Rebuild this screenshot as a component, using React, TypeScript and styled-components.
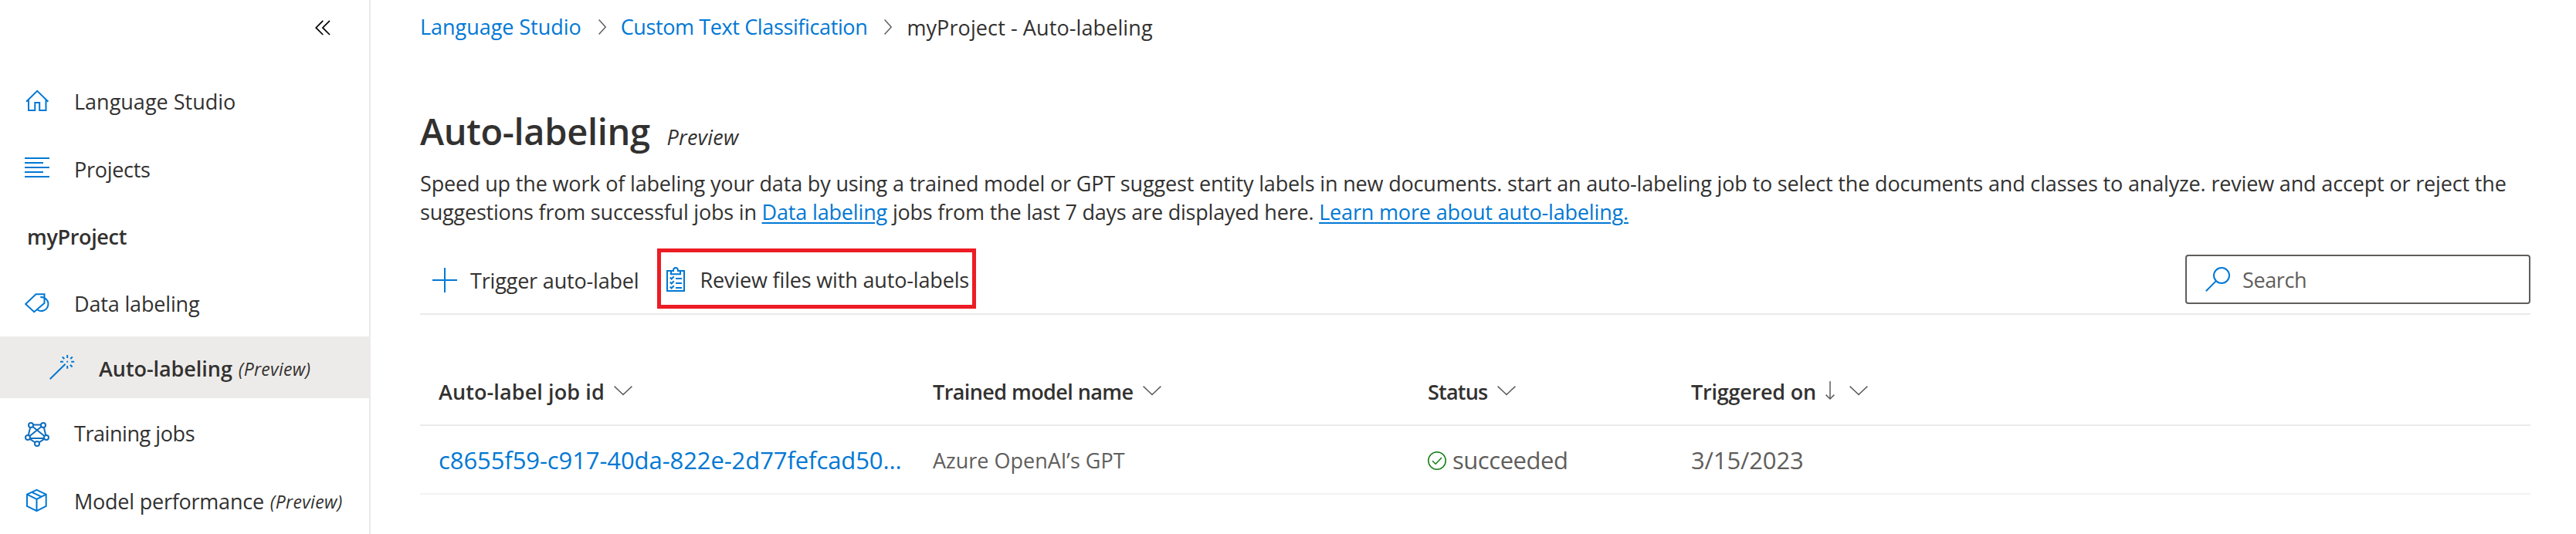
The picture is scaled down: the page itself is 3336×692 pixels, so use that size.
import React from 'react';
import styled, { createGlobalStyle, css } from 'styled-components';

const blue = '#0078d4';
const ink = '#323130';
const muted = '#605e5c';
const rule = '#eaeaea';

const GlobalStyle = createGlobalStyle`
  * { box-sizing: border-box; }
  body {
    margin: 0;
    background: #fff;
    color: ${ink};
    font-family: 'Open Sans', 'Noto Sans', sans-serif;
    font-size: 27px;
    line-height: 37px;
  }
`;

const Page = styled.div`
  display: flex;
  width: 3336px;
  height: 692px;
  overflow: hidden;
`;

/* Sidebar */

const Sidebar = styled.nav`
  flex: none;
  width: 480px;
  border-right: 2px solid ${rule};
`;

const SidebarTop = styled.div`
  height: 86px;
  display: flex;
  justify-content: flex-end;
  align-items: flex-start;
  padding: 26px 50px 0 0;
`;

const NavRow = styled.a<{ $height?: number; $selected?: boolean }>`
  display: flex;
  align-items: center;
  height: ${(p) => p.$height ?? 88}px;
  padding-left: 32px;
  white-space: nowrap;
  ${(p) =>
    p.$selected &&
    css`
      padding-left: 64px;
      margin-right: -2px;
      background: #edebe9;
      font-weight: 600;
    `}
`;

const NavLabel = styled.span<{ $ls?: number; $left?: number }>`
  padding-top: 3px;
  margin-left: ${(p) => p.$left ?? 32}px;
  letter-spacing: ${(p) => p.$ls ?? 0}px;
`;

const NavTag = styled.em`
  padding-top: 4px;
  margin-left: 8px;
  font-size: 23px;
  font-weight: 400;
  letter-spacing: 0.3px;
`;

const ProjectName = styled.div`
  height: 86px;
  padding: 26px 0 0 35px;
  font-weight: 600;
  letter-spacing: -0.35px;
`;

const Icon = styled.svg`
  display: block;
  flex: none;
  overflow: visible;
  fill: none;
  stroke: ${blue};
  stroke-width: 2;
`;

const CollapseIcon = styled(Icon)`
  stroke: #000;
  stroke-width: 1.7;
`;

/* Main column */

const Main = styled.main`
  flex: 1;
  min-width: 0;
  padding: 14px 59px 0 64px;
`;

const Breadcrumb = styled.div`
  display: flex;
  align-items: center;
  height: 41px;
  white-space: nowrap;
`;

const Crumb = styled.a<{ $current?: boolean; $ls?: number }>`
  color: ${(p) => (p.$current ? ink : blue)};
  padding-top: ${(p) => (p.$current ? 2 : 0)}px;
  letter-spacing: ${(p) => p.$ls ?? 0}px;
`;

const CrumbArrow = styled(Icon)`
  margin: 0 19px 0 22px;
  stroke: ${muted};
  stroke-width: 1.5;
`;

const TitleRow = styled.div`
  display: flex;
  align-items: baseline;
  height: 60px;
  margin-top: 85px;
`;

const Title = styled.h1`
  margin: 0;
  font-size: 47px;
  line-height: 60px;
  font-weight: 600;
  letter-spacing: -0.35px;
`;

const TitleTag = styled.em`
  margin-left: 22px;
  padding-top: 1px;
  letter-spacing: 0.2px;
`;

const Intro = styled.p`
  margin: 19px 0 0;
  white-space: nowrap;
`;

const Run = styled.span<{ $ls: number }>`
  letter-spacing: ${(p) => p.$ls}px;
`;

const Link = styled.a<{ $ls: number }>`
  color: ${blue};
  letter-spacing: ${(p) => p.$ls}px;
  text-decoration: underline;
  text-decoration-thickness: 2px;
  text-underline-offset: 3px;
`;

const Toolbar = styled.div`
  display: flex;
  align-items: center;
  height: 90px;
  margin-top: 25px;
  border-bottom: 2px solid ${rule};
`;

const ToolButton = styled.button<{ $highlight?: boolean }>`
  display: flex;
  align-items: center;
  height: 78px;
  margin: 0 24px 2px 0;
  padding: 3px 0 0 16px;
  border: 0;
  background: none;
  color: inherit;
  font: inherit;
  white-space: nowrap;
  ${(p) =>
    p.$highlight &&
    css`
      width: 413px;
      margin-right: 0;
      padding: 2px 0 0 7px;
      border: 5px solid #ed1c24;
    `}
`;

const ToolLabel = styled.span<{ $ls: number; $left: number }>`
  padding-top: 1px;
  margin-left: ${(p) => p.$left}px;
  letter-spacing: ${(p) => p.$ls}px;
`;

const SearchBox = styled.div`
  display: flex;
  align-items: center;
  width: 447px;
  height: 64px;
  margin-left: auto;
  padding-left: 24px;
  border: 2px solid ${muted};
  border-radius: 4px;
  color: ${muted};
`;

const SearchHint = styled.span`
  padding-top: 1px;
  margin-left: 16px;
  letter-spacing: -0.39px;
`;

/* Jobs table */

const Table = styled.div`
  margin-top: 55px;
`;

const Row = styled.div<{ $header?: boolean }>`
  display: grid;
  grid-template-columns: 640px 641px 341px 1fr;
  align-items: center;
  height: 89px;
  padding-left: 24px;
  border-bottom: 2px solid ${(p) => (p.$header ? rule : '#f3f2f1')};
  font-weight: ${(p) => (p.$header ? 600 : 400)};
  color: ${(p) => (p.$header ? ink : muted)};
`;

const Cell = styled.div<{ $large?: boolean; $ls?: number; $tone?: string }>`
  display: flex;
  align-items: center;
  padding-top: 1px;
  white-space: nowrap;
  font-size: ${(p) => (p.$large ? 31 : 27)}px;
  letter-spacing: ${(p) => p.$ls ?? 0}px;
  color: ${(p) => p.$tone ?? 'inherit'};
`;

const HeadIcon = styled(Icon)<{ $left?: number }>`
  margin: -2px 0 0 ${(p) => p.$left ?? 13}px;
  stroke: ${muted};
  stroke-width: 1.5;
`;

const StatusIcon = styled(Icon)`
  margin: 1px 8px 0 0;
  stroke: #107c10;
  stroke-width: 1.5;
`;

const Square = ({ children }: { children: React.ReactNode }) => (
  <Icon width="32" height="32" viewBox="0 0 32 32">
    {children}
  </Icon>
);

const Chevron = ({ left }: { left?: number }) => (
  <HeadIcon $left={left} width="24" height="12" viewBox="0 0 24 12">
    <path d="M.6.6 12 11.4 23.4.6" />
  </HeadIcon>
);

const Separator = () => (
  <CrumbArrow width="10" height="20" viewBox="0 0 10 20">
    <path d="M.6.6 9.2 10 .6 19.4" />
  </CrumbArrow>
);

const HomeIcon = () => (
  <Square>
    <path d="M2 17.8 16.2 3.8 30.4 17.8M5 15.2V29H13.3V19H19.2V29H27.5V15.2" />
  </Square>
);

const ListIcon = () => (
  <Square>
    <path d="M0 3H32M0 9H24M0 15H32M0 21H24M0 27H32" />
  </Square>
);

const TagIcon = () => (
  <Square>
    <path d="M1.2 18 14.5 5.2H25.5V16.7L12.2 28.2ZM20.3 9.1A9 9 0 1 1 16 25.2" />
  </Square>
);

const WandIcon = () => (
  <Square>
    <path d="M.7 31.3 20.6 11.8M23.2 0V4M23.2 14V17.8M14 8.8H18M28.2 8.8H32.2M16.8 2.5 19.3 5M27.2 5 29.8 2.5M26.9 12.7 29.6 15.5M22.3 8.8H24.1" />
  </Square>
);

const nodes = [
  [8, 7],
  [24, 7],
  [4, 23],
  [28, 23],
  [16, 31],
];

const NetworkIcon = () => (
  <Square>
    <g stroke="#106ebe">
      <path d="M8 6.500H24L28 23 16 31 4 23ZM8 7 28 23M24 7 4 23M4 24H28" />
      {nodes.map(([x, y]) => (
        <circle key={`${x}-${y}`} cx={x} cy={y} r="3" fill="#fff" />
      ))}
    </g>
  </Square>
);

const BoxIcon = () => (
  <Square>
    <path d="M15.5 2.9 27.7 8.6V24L15.5 30.2 3 24V8.6ZM3 8.6 15.5 14.8 27.7 8.6M15.5 14.8V30.2M9.2 5.8 21.6 11.7" />
  </Square>
);

export default function App() {
  return (
    <>
      <GlobalStyle />
      <Page>
        <Sidebar>
          <SidebarTop>
            <CollapseIcon width="20" height="20" viewBox="0 0 20 20">
              <path d="M10.3.8 1.2 9.9 10.3 19M19 .8 9.9 9.9 19 19" />
            </CollapseIcon>
          </SidebarTop>
          <NavRow>
            <HomeIcon />
            <NavLabel>Language Studio</NavLabel>
          </NavRow>
          <NavRow>
            <ListIcon />
            <NavLabel $ls={-0.29}>Projects</NavLabel>
          </NavRow>
          <ProjectName>myProject</ProjectName>
          <NavRow>
            <TagIcon />
            <NavLabel $ls={-0.16}>Data labeling</NavLabel>
          </NavRow>
          <NavRow $height={80} $selected>
            <WandIcon />
            <NavLabel $ls={-0.06} $left={32}>Auto-labeling</NavLabel>
            <NavTag>(Preview)</NavTag>
          </NavRow>
          <NavRow>
            <NetworkIcon />
            <NavLabel $ls={-0.44}>Training jobs</NavLabel>
          </NavRow>
          <NavRow>
            <BoxIcon />
            <NavLabel $ls={-0.23}>Model performance</NavLabel>
            <NavTag>(Preview)</NavTag>
          </NavRow>
        </Sidebar>

        <Main>
          <Breadcrumb>
            <Crumb $ls={-0.04}>Language Studio</Crumb>
            <Separator />
            <Crumb $ls={-0.38}>Custom Text Classification</Crumb>
            <Separator />
            <Crumb $current $ls={0.1}>myProject - Auto-labeling</Crumb>
          </Breadcrumb>

          <TitleRow>
            <Title>Auto-labeling</Title>
            <TitleTag>Preview</TitleTag>
          </TitleRow>

          <Intro>
            <Run $ls={-0.16}>
              Speed up the work of labeling your data by using a trained model or GPT suggest entity
              labels in new documents. start an auto-labeling job to select the documents and classes
              to analyze. review and accept or reject the
            </Run>
            <br />
            <Run $ls={-0.2}>suggestions from successful jobs in </Run>
            <Link $ls={-0.16}>Data labeling</Link>
            <Run $ls={-0.21}> jobs from the last 7 days are displayed here. </Run>
            <Link $ls={-0.16}>Learn more about auto-labeling.</Link>
          </Intro>

          <Toolbar>
            <ToolButton>
              <Square>
                <path d="M16 0V32M0 16H32" />
              </Square>
              <ToolLabel $ls={-0.18} $left={17}>Trigger auto-label</ToolLabel>
            </ToolButton>
            <ToolButton $highlight>
              <Icon width="24" height="32" viewBox="0 0 24 32">
                <path d="M6 5H1V31H23V5H18M6 5H9C9 2.3 10.2 1 12 1S15 2.3 15 5H18V9.3H6Z" />
                <path d="M4.8 13.5 6.6 15.5 9.8 12.3M4.8 19.5 6.6 21.5 9.8 18.3M4.8 25.5 6.6 27.5 9.8 24.3M12 15H20M12 21H20M12 27H20" />
              </Icon>
              <ToolLabel $ls={-0.16} $left={19}>Review files with auto-labels</ToolLabel>
            </ToolButton>
            <SearchBox>
              <Square>
                <circle cx="21" cy="11" r="10" />
                <path d="M.8 31.3 13.9 18.1" />
              </Square>
              <SearchHint>Search</SearchHint>
            </SearchBox>
          </Toolbar>

          <Table>
            <Row $header>
              <Cell $ls={0.1}>
                Auto-label job id
                <Chevron left={12} />
              </Cell>
              <Cell $ls={-0.58}>
                Trained model name
                <Chevron />
              </Cell>
              <Cell $ls={-0.8}>
                Status
                <Chevron />
              </Cell>
              <Cell $ls={-0.22}>
                Triggered on
                <HeadIcon $left={12} width="12" height="24" viewBox="0 0 12 24">
                  <path d="M6 0V23M.6 17.6 6 23 11.4 17.6" />
                </HeadIcon>
                <Chevron left={19} />
              </Cell>
            </Row>
            <Row>
              <Cell $large $ls={-0.09} $tone={blue}>c8655f59-c917-40da-822e-2d77fefcad50...</Cell>
              <Cell>Azure OpenAI’s GPT</Cell>
              <Cell $large $ls={-0.46}>
                <StatusIcon width="24" height="24" viewBox="0 0 24 24">
                  <circle cx="12" cy="12" r="11.2" />
                  <path d="M6 12.3 10.2 16.3 18 8" />
                </StatusIcon>
                succeeded
              </Cell>
              <Cell $large $ls={-0.14}>3/15/2023</Cell>
            </Row>
          </Table>
        </Main>
      </Page>
    </>
  );
}
